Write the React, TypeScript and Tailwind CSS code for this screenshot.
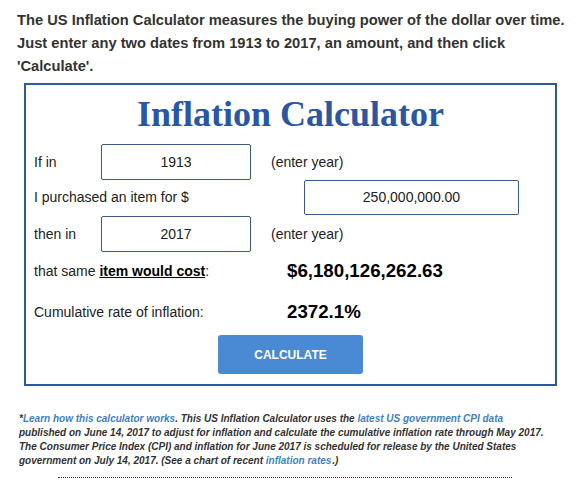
export default function App() {
  return (
    <div className="w-[586px] h-[487px] overflow-hidden bg-white font-['Liberation_Sans',Arial,sans-serif] text-[#222]">
      <p className="w-[560px] pl-[17px] pt-[9px] text-[14.7px] leading-[23px] font-bold text-[#333] box-content">
        The US Inflation Calculator measures the buying power of the dollar over time. Just enter any two dates from 1913 to 2017, an amount, and then click 'Calculate'.
      </p>

      <div className="ml-[24px] mt-[5px] w-[533px] h-[303px] border-2 border-[#2e5a9b]">
        <h1 className="h-[59px] text-center font-['Liberation_Serif','Times_New_Roman',serif] text-[36px] leading-[59px] font-bold text-[#2a56a4]">
          Inflation Calculator
        </h1>

        <div className="pl-[8px] text-[14px]">
          <div className="flex h-[36px] items-center">
            <span className="w-[67px]">If in</span>
            <div className="flex h-[36px] w-[150px] items-center justify-center rounded-[2px] border border-[#3a5a85]">1913</div>
            <span className="ml-[20px]">(enter year)</span>
          </div>

          <div className="flex h-[35px] items-center">
            <span className="w-[270px]">I purchased an item for $</span>
            <div className="flex h-[35px] w-[215px] items-center justify-center rounded-[2px] border border-[#3a5a85]">250,000,000.00</div>
          </div>

          <div className="mt-[1px] flex h-[36px] items-center">
            <span className="w-[67px]">then in</span>
            <div className="flex h-[36px] w-[150px] items-center justify-center rounded-[2px] border border-[#3a5a85]">2017</div>
            <span className="ml-[20px]">(enter year)</span>
          </div>

          <div className="flex h-[38px] items-center">
            <span className="w-[253px]">
              that same <a className="font-bold text-black underline">item would cost</a>:
            </span>
            <span className="text-[18.7px] font-bold text-black">$6,180,126,262.63</span>
          </div>

          <div className="flex h-[44px] items-center">
            <span className="w-[253px]">Cumulative rate of inflation:</span>
            <span className="text-[18.7px] font-bold text-black">2372.1%</span>
          </div>
        </div>

        <div className="mt-[1px] flex justify-center">
          <button className="h-[39px] w-[145px] rounded-[3px] bg-[#4a89d3] text-[12px] font-bold text-white">
            CALCULATE
          </button>
        </div>
      </div>

      <p className="mt-[26px] w-[531px] pl-[19px] text-[10px] leading-[14px] font-bold italic text-[#333] box-content">
        *<a className="text-[#3f80c4]">Learn how this calculator works</a>. This US Inflation Calculator uses the{" "}
        <a className="text-[#3f80c4]">latest US government CPI data</a> published on June 14, 2017 to adjust for inflation and calculate the cumulative inflation rate through May 2017. The Consumer Price Index (CPI) and inflation for June 2017 is scheduled for release by the United States government on July 14, 2017. (See a chart of recent <a className="mr-[1px] text-[#3f80c4]">inflation rates</a>.)
      </p>

      <div className="ml-[58px] mt-[9px] w-[454px] border-t border-dotted border-[#333]" />
    </div>
  );
}
